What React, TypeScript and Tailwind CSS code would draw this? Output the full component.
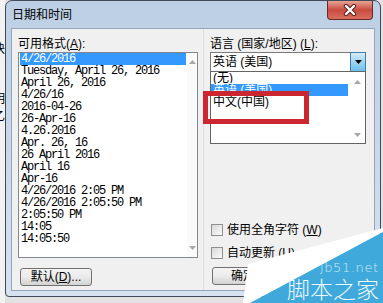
import React from 'react';

const formats = [
  '4/26/2016',
  'Tuesday, April 26, 2016',
  'April 26, 2016',
  '4/26/16',
  '2016-04-26',
  '26-Apr-16',
  '4.26.2016',
  'Apr. 26, 16',
  '26 April 2016',
  'April 16',
  'Apr-16',
  '4/26/2016 2:05 PM',
  '4/26/2016 2:05:50 PM',
  '2:05:50 PM',
  '14:05',
  '14:05:50',
];

function Arrow({ up, color = '#a6a6a6' }: { up?: boolean; color?: string }) {
  return (
    <svg width="7" height="4" viewBox="0 0 7 4">
      <path d={up ? 'M0 4 L3.5 0 L7 4 Z' : 'M0 0 L3.5 4 L7 0 Z'} fill={color} />
    </svg>
  );
}

function Checkbox({ label, k }: { label: string; k: string }) {
  return (
    <div className="flex items-center h-[12px]">
      <div className="w-[12px] h-[12px] border border-[#8e8f8f] bg-linear-to-br from-[#d8d8d8] to-[#fbfbfb]" />
      <span className="ml-[4px] leading-[12px]">
        {label} (<span className="underline">{k}</span>)
      </span>
    </div>
  );
}

export default function App() {
  return (
    <div className="w-[383px] h-[303px] relative overflow-hidden bg-[#e2e2e2] flex text-[12px] text-black font-['Liberation_Sans','Noto_Sans_CJK_SC',sans-serif]">
      {/* window behind, only its edge shows */}
      <div className="w-[5px] shrink-0 overflow-hidden bg-[#f2f2f2] flex flex-col pt-[43px]">
        <div className="flex justify-end leading-[12px]">块</div>
        <div className="flex justify-end leading-[12px] mt-[38px]">明</div>
        <div className="flex justify-end leading-[12px] mt-[6px]">乙</div>
      </div>

      <div className="w-[376px] h-[297px] shrink-0 border border-[#3f4a56] rounded-t-[7px] rounded-b-[4px] bg-linear-to-b from-[#bccfe4] to-[#d6e2ef] flex flex-col">
        {/* title bar */}
        <div className="h-[27px] flex justify-between">
          <div className="pl-[6px] pt-[7px] leading-[14px]">日期和时间</div>
          <div className="mr-[7px] w-[46px] h-[19px] rounded-b-[4px] border border-t-0 border-[#6b2a26] bg-linear-to-b from-[#e6a395] via-[#c94a3f] to-[#d86f5f] flex items-center justify-center">
            <svg width="16" height="12" viewBox="0 0 16 12">
              <path d="M4 2 L12 10 M12 2 L4 10" stroke="#5a2320" strokeWidth="4.4" strokeLinecap="round" />
              <path d="M4 2 L12 10 M12 2 L4 10" stroke="#ffffff" strokeWidth="2.4" strokeLinecap="round" />
            </svg>
          </div>
        </div>

        {/* client area */}
        <div className="mx-[5px] h-[263px] border border-[#95a5b8] bg-[#f0f0f0] flex">
          {/* left column */}
          <div className="w-[191px] shrink-0 pl-[6px] pt-[8px] flex flex-col">
            <div className="leading-[14px]">
              可用格式(<span className="underline">A</span>):
            </div>
            <div className="mt-[1px] w-[180px] h-[206px] border border-[#828790] bg-white flex">
              <div className="flex-1 mx-[1px] font-['Liberation_Mono',monospace] tracking-[-1.2px]">
                {formats.map((f, i) => (
                  <div
                    key={f}
                    className={
                      i === 0
                        ? 'h-[12px] leading-[12px] pl-[1px] whitespace-pre bg-[#3399ff] text-white'
                        : 'h-[12px] leading-[12px] pl-[1px] whitespace-pre'
                    }
                  >
                    {f}
                  </div>
                ))}
              </div>
              <div className="w-[10px] bg-[#fafafa] flex flex-col items-center justify-between pt-[7px] pb-[7px]">
                <Arrow up />
                <Arrow />
              </div>
            </div>
            <button className="mt-[10px] ml-[2px] w-[72px] h-[18px] border border-[#707070] rounded-[3px] bg-linear-to-b from-[#f4f4f4] via-[#ebebeb] to-[#d3d3d3] leading-[16px]">
              默认(<span className="underline">D</span>)...
            </button>
          </div>

          {/* right column */}
          <div className="flex-1 border-l border-[#dedede] pl-[6px] pt-[8px] flex flex-col">
            <div className="leading-[14px]">
              语言 (国家/地区) (<span className="underline">L</span>):
            </div>
            <div className="relative mt-[1px] w-[156px] h-[20px] border border-[#7a7a7a] bg-white flex">
              <div className="flex-1 pl-[2px] leading-[18px]">英语 (美国)</div>
              <div className="w-[16px] -my-px -mr-px border border-[#3c7fb1] bg-linear-to-b from-[#d7ecf8] via-[#9fd4f2] to-[#6cc0ec] flex items-center justify-center">
                <Arrow color="#000000" />
              </div>

              {/* open dropdown list */}
              <div className="absolute -left-px top-[18px] w-[156px] h-[73px] border border-[#646464] bg-white flex z-10">
                <div className="flex-1 mr-[1px]">
                  <div className="h-[12px] leading-[12px] pl-[2px]">(无)</div>
                  <div className="h-[12px] leading-[12px] pl-[2px] bg-[#3399ff] text-white">英语 (美国)</div>
                  <div className="h-[12px] leading-[12px] pl-[2px]">中文(中国)</div>
                </div>
                <div className="w-[16px] flex flex-col items-center justify-between pt-[8px] pb-[6px]">
                  <Arrow up />
                  <Arrow />
                </div>
              </div>
            </div>

            <div className="mt-[152px] ml-[1px] flex flex-col gap-[11px]">
              <Checkbox label="使用全角字符" k="W" />
              <Checkbox label="自动更新" k="U" />
            </div>
            <button className="mt-[8px] ml-[2px] w-[62px] h-[18px] border border-[#707070] rounded-[3px] bg-linear-to-b from-[#f4f4f4] via-[#ebebeb] to-[#d3d3d3] leading-[16px]">
              确定
            </button>
          </div>
        </div>
      </div>

      {/* red annotation box */}
      <div className="absolute left-[203px] top-[91px] w-[106px] h-[33px] border-[5px] border-[#cc2630] z-20" />

      {/* watermark */}
      <svg className="absolute left-0 top-0 z-30" width="383" height="303" viewBox="0 0 383 303">
        <polygon points="248,264 383,228 383,232 250,303 243,303" fill="#ffffff" />
        <polygon points="250,303 383,232 383,303" fill="#3fa9dc" />
      </svg>
      <div className="absolute left-[320px] top-[261px] z-40 text-[13px] leading-[14px] tracking-[0.6px] text-[#cdeaf7] font-['DejaVu_Sans',sans-serif] font-light">
        jb51.net
      </div>
      <div className="absolute left-[287px] top-[276px] z-40 text-[23px] leading-[25px] text-[#eef8fd] font-['Noto_Sans_CJK_SC',sans-serif] font-light">
        脚本之家
      </div>
    </div>
  );
}
